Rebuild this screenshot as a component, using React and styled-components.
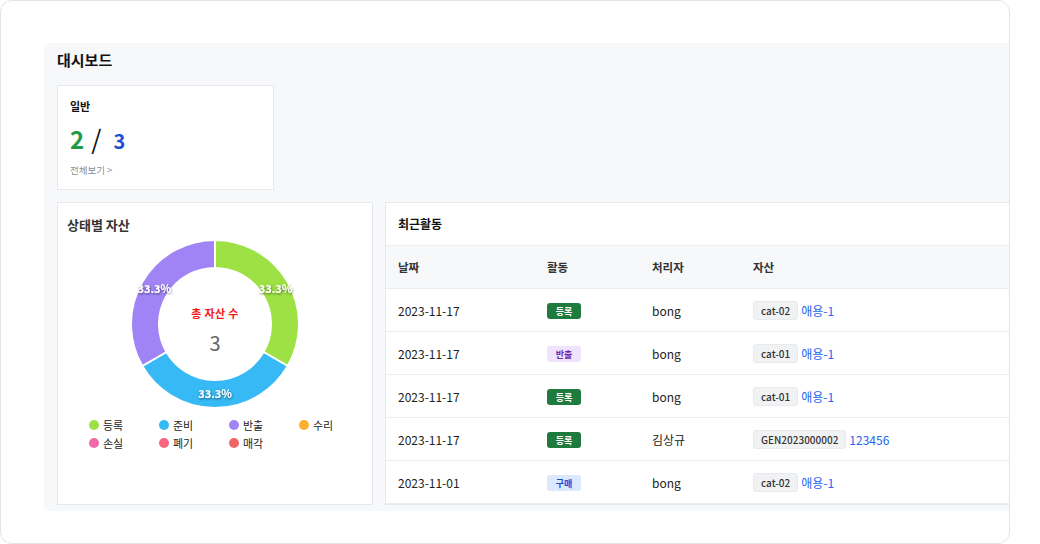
import React from "react";
import styled, { createGlobalStyle } from "styled-components";

const GlobalStyle = createGlobalStyle`
  html, body {
    margin: 0;
    padding: 0;
    background: #ffffff;
    font-family: "Noto Sans CJK KR", "Noto Sans", sans-serif;
  }
`;

const legend = [
  { label: "등록", color: "#9de144" },
  { label: "준비", color: "#36b9f4" },
  { label: "반출", color: "#a084f5" },
  { label: "수리", color: "#fbb02f" },
  { label: "손실", color: "#f06aa9" },
  { label: "폐기", color: "#f8657f" },
  { label: "매각", color: "#f06565" },
];

const segments = [
  { color: "#9de144", from: 0, to: 120 },
  { color: "#36b9f4", from: 120, to: 240 },
  { color: "#a084f5", from: 240, to: 360 },
];

const activities = [
  { date: "2023-11-17", kind: "green", act: "등록", user: "bong", tag: "cat-02", name: "애용-1" },
  { date: "2023-11-17", kind: "purple", act: "반출", user: "bong", tag: "cat-01", name: "애용-1" },
  { date: "2023-11-17", kind: "green", act: "등록", user: "bong", tag: "cat-01", name: "애용-1" },
  { date: "2023-11-17", kind: "green", act: "등록", user: "김상규", tag: "GEN2023000002", name: "123456" },
  { date: "2023-11-01", kind: "blue", act: "구매", user: "bong", tag: "cat-02", name: "애용-1" },
];

const pt = (cx, cy, r, deg) => {
  const a = ((deg - 90) * Math.PI) / 180;
  return [cx + r * Math.cos(a), cy + r * Math.sin(a)];
};

function arcPath(cx, cy, R, r, from, to) {
  const [x1, y1] = pt(cx, cy, R, from);
  const [x2, y2] = pt(cx, cy, R, to);
  const [x3, y3] = pt(cx, cy, r, to);
  const [x4, y4] = pt(cx, cy, r, from);
  const large = to - from > 180 ? 1 : 0;
  return `M${x1} ${y1} A${R} ${R} 0 ${large} 1 ${x2} ${y2} L${x3} ${y3} A${r} ${r} 0 ${large} 0 ${x4} ${y4} Z`;
}

function Donut() {
  const c = 86;
  return (
    <DonutWrap>
      <svg width="172" height="172" viewBox="0 0 172 172">
        <defs>
          <filter id="ts" x="-20%" y="-20%" width="140%" height="140%">
            <feDropShadow dx="0.5" dy="1" stdDeviation="0.8" floodColor="#000" floodOpacity="0.55" />
          </filter>
        </defs>
        {segments.map((s) => (
          <path key={s.color} d={arcPath(c, c, 84, 56, s.from, s.to)} fill={s.color} stroke="#fff" strokeWidth="2" />
        ))}
        {segments.map((s) => {
          const [x, y] = pt(c, c, 70, (s.from + s.to) / 2);
          return (
            <text
              key={s.color + "t"}
              x={x}
              y={y + 4}
              textAnchor="middle"
              fill="#fff"
              fontSize="11"
              fontWeight="700"
              fontFamily="'Noto Sans CJK KR', sans-serif"
              filter="url(#ts)"
            >
              33.3%
            </text>
          );
        })}
      </svg>
      <DonutCenter>
        <CenterLabel>총 자산 수</CenterLabel>
        <CenterValue>3</CenterValue>
      </DonutCenter>
    </DonutWrap>
  );
}

export default function App() {
  return (
    <>
      <GlobalStyle />
      <Frame>
        <Panel>
          <PageTitle>대시보드</PageTitle>
          <SummaryCard>
            <SummaryTitle>일반</SummaryTitle>
            <Count>
              <Num color="#1f9a46">2</Num>
              <Slash>/</Slash>
              <Num color="#1e4fd6" small>3</Num>
            </Count>
            <MoreLink>전체보기 &gt;</MoreLink>
          </SummaryCard>
          <Grid>
            <Card>
              <ChartTitle>상태별 자산</ChartTitle>
              <Donut />
              <Legend>
                {legend.map((l) => (
                  <LegendItem key={l.label}>
                    <Dot color={l.color} />
                    {l.label}
                  </LegendItem>
                ))}
              </Legend>
            </Card>
            <Card>
              <TableTitle>최근활동</TableTitle>
              <Table>
                <colgroup>
                  <col style={{ width: 149 }} />
                  <col style={{ width: 105 }} />
                  <col style={{ width: 101 }} />
                  <col />
                </colgroup>
                <thead>
                  <tr>
                    <Th>날짜</Th>
                    <Th>활동</Th>
                    <Th>처리자</Th>
                    <Th>자산</Th>
                  </tr>
                </thead>
                <tbody>
                  {activities.map((a, i) => (
                    <tr key={i}>
                      <Td>{a.date}</Td>
                      <Td>
                        <Badge kind={a.kind}>{a.act}</Badge>
                      </Td>
                      <Td>{a.user}</Td>
                      <Td>
                        <Asset>
                          <Tag>{a.tag}</Tag>
                          <AssetLink>{a.name}</AssetLink>
                        </Asset>
                      </Td>
                    </tr>
                  ))}
                </tbody>
              </Table>
            </Card>
          </Grid>
        </Panel>
      </Frame>
    </>
  );
}

const Frame = styled.div`
  width: 1010px;
  height: 544px;
  border: 1px solid #e4e5e7;
  border-radius: 12px;
  overflow: hidden;
  padding: 42px 0 0 43px;
  box-sizing: border-box;
  background: #fff;
`;

const Panel = styled.div`
  width: 986px;
  height: 468px;
  background: #f7f8fa;
  border-radius: 5px;
  padding: 8px 13px 0 13px;
  box-sizing: border-box;
  display: flex;
  flex-direction: column;
`;

const PageTitle = styled.h1`
  margin: 0;
  font-size: 15px;
  font-weight: 700;
  color: #111;
  line-height: 18px;
`;

const SummaryCard = styled.div`
  margin-top: 16px;
  width: 217px;
  height: 105px;
  box-sizing: border-box;
  background: #fff;
  border: 1px solid #e6e8eb;
  padding: 12px 12px 0 12px;
  display: flex;
  flex-direction: column;
`;

const SummaryTitle = styled.div`
  font-size: 11px;
  font-weight: 700;
  color: #111;
  line-height: 16px;
`;

const Count = styled.div`
  display: flex;
  align-items: baseline;
  margin-top: 8px;
  height: 32px;
`;

const Num = styled.span`
  font-size: ${(p) => (p.small ? "20px" : "24px")};
  font-weight: 700;
  color: ${(p) => p.color};
  line-height: 32px;
`;

const Slash = styled.span`
  font-size: 26px;
  color: #111;
  margin: 0 12px 0 7px;
  line-height: 32px;
`;

const MoreLink = styled.div`
  margin-top: 9px;
  font-size: 9.5px;
  color: #8a8f96;
  line-height: 14px;
`;

const Grid = styled.div`
  margin-top: 12px;
  display: grid;
  grid-template-columns: 316px 1fr;
  gap: 12px;
  height: 303px;
`;

const Card = styled.div`
  background: #fff;
  border: 1px solid #e6e8eb;
  box-sizing: border-box;
  display: flex;
  flex-direction: column;
  overflow: hidden;
`;

const ChartTitle = styled.div`
  font-size: 13px;
  font-weight: 700;
  color: #333;
  padding: 13px 9px 0;
  line-height: 18px;
`;

const DonutWrap = styled.div`
  position: relative;
  width: 172px;
  height: 172px;
  align-self: center;
  margin-top: 4px;
`;

const DonutCenter = styled.div`
  position: absolute;
  inset: 0;
  display: flex;
  flex-direction: column;
  align-items: center;
  justify-content: center;
  padding-top: 13px;
`;

const CenterLabel = styled.div`
  font-size: 11px;
  font-weight: 700;
  color: #f51a1a;
  letter-spacing: 0.3px;
  line-height: 16px;
`;

const CenterValue = styled.div`
  font-size: 20px;
  color: #666;
  margin-top: 9px;
  line-height: 26px;
`;

const Legend = styled.div`
  display: grid;
  grid-template-columns: repeat(4, 70px);
  row-gap: 2px;
  padding-left: 31px;
  margin-top: 7px;
`;

const LegendItem = styled.div`
  display: flex;
  align-items: center;
  gap: 4px;
  font-size: 11px;
  color: #222;
  line-height: 16px;
`;

const Dot = styled.span`
  width: 10px;
  height: 10px;
  border-radius: 50%;
  background: ${(p) => p.color};
`;

const TableTitle = styled.div`
  font-size: 12px;
  font-weight: 700;
  color: #111;
  padding: 12px 12px 0;
  height: 43px;
  box-sizing: border-box;
  line-height: 18px;
`;

const Table = styled.table`
  width: 100%;
  table-layout: fixed;
  border-collapse: collapse;
`;

const Th = styled.th`
  text-align: left;
  font-size: 11.5px;
  font-weight: 700;
  color: #333;
  background: #f7f8fa;
  height: 42px;
  padding: 0 0 0 12px;
  border-top: 1px solid #eceef0;
  border-bottom: 1px solid #eceef0;
`;

const Td = styled.td`
  font-size: 12px;
  color: #222;
  height: 42px;
  padding: 0 0 0 12px;
  border-bottom: 1px solid #eceef0;
`;

const badgeColors = {
  green: { bg: "#1e7a3d", fg: "#ffffff" },
  purple: { bg: "#efe4fc", fg: "#6b2bb0" },
  blue: { bg: "#dbe8fd", fg: "#1d4ed8" },
};

const Badge = styled.span`
  display: inline-flex;
  align-items: center;
  justify-content: center;
  width: 34px;
  height: 16px;
  border-radius: 3px;
  font-size: 9px;
  font-weight: 700;
  background: ${(p) => badgeColors[p.kind].bg};
  color: ${(p) => badgeColors[p.kind].fg};
`;

const Asset = styled.div`
  display: flex;
  align-items: center;
  gap: 3px;
`;

const Tag = styled.span`
  display: inline-flex;
  align-items: center;
  height: 17px;
  padding: 0 7px;
  border-radius: 3px;
  background: #f1f2f4;
  border: 1px solid #e8eaed;
  font-size: 10px;
  font-weight: 500;
  color: #333;
`;

const AssetLink = styled.span`
  font-size: 12px;
  color: #2563eb;
`;
